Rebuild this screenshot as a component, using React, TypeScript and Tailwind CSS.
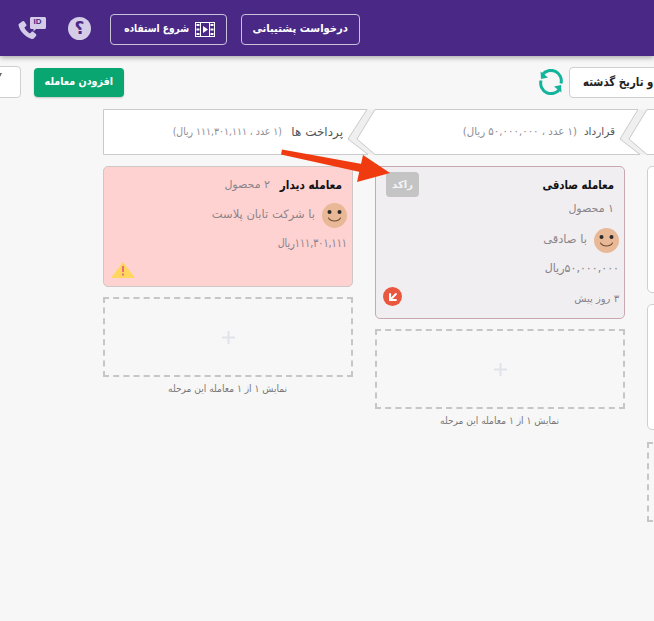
import React from "react";
import { ArrowDownLeft } from "lucide-react";

const Smile = ({ eyeColor = "#2b2b2b" }: { eyeColor?: string }) => (
  <svg width="25" height="25" viewBox="0 0 25 25" className="shrink-0">
    <circle cx="12.5" cy="12.5" r="12.5" fill="#e9b897" />
    <circle cx="7.5" cy="9" r="2" fill={eyeColor} />
    <circle cx="17.5" cy="9" r="2" fill={eyeColor} />
    <path d="M6.5 15c2.5 4 9.5 4 12 0" fill="none" stroke="#6b4a35" strokeWidth="1.1" strokeLinecap="round" />
  </svg>
);

const Plus = () => (
  <svg width="13" height="13" viewBox="0 0 13 13">
    <path d="M6.5 0v13M0 6.5h13" stroke="#e1e3ea" strokeWidth="2" />
  </svg>
);

const AddBox = ({ note = true }: { note?: boolean }) => (
  <>
    <div className="w-[250px] h-[80px] border-[2.5px] border-dashed border-[#c6c6c6] flex items-center justify-center">
      <Plus />
    </div>
    {note && (
      <div className="w-[250px] mt-[5px] flex justify-center text-[10px] leading-[14px] text-[#777]">
        <span dir="rtl" className="inline-block w-[118px] whitespace-nowrap origin-right scale-x-[0.91]">
          نمایش ۱ از ۱ معامله این مرحله
        </span>
      </div>
    )}
  </>
);

const StageShape = ({ d }: { d: string }) => (
  <svg width="272" height="46" viewBox="0 0 272 46" className="absolute left-0 top-0 overflow-visible">
    <path d="M264 0.500L245 30 265 45.500H272L254 30 272 0.500Z" fill="#efefef" />
    <path d={d} fill="#ffffff" stroke="#cacaca" strokeWidth="1" />
  </svg>
);

const Stage = ({
  d,
  name,
  info,
  nameClass,
  infoClass,
}: {
  d: string;
  name?: string;
  info?: string;
  nameClass?: string;
  infoClass?: string;
}) => (
  <div className="relative w-[272px] h-[46px] shrink-0">
    <StageShape d={d} />
    <div dir="rtl" className="relative w-[250px] h-[46px] pr-[10px] flex items-center gap-[9px] whitespace-nowrap">
      <span className={nameClass}>{name}</span>
      {info && <span className={infoClass}>{info}</span>}
    </div>
  </div>
);

export default function App() {
  return (
    <div
      dir="ltr"
      className="relative w-[654px] h-[621px] overflow-hidden bg-[#f7f7f7] font-['DejaVu_Sans',sans-serif]"
    >
      {/* header */}
      <header className="h-[56px] bg-[#4a2885] shadow-[0_2px_5px_rgba(0,0,0,0.3)] flex items-center pl-[18px]">
        <svg width="29" height="25" viewBox="0 0 29 25" className="shrink-0">
          <g transform="translate(-1.5 0)">
            <path
              d="M3.2 7.2 6 5.2c.6-.4 1.4-.3 1.8.3l2 3c.3.5.3 1.2-.2 1.6l-1.7 1.5c1 2.2 3 4.5 5.5 5.8l1.6-1.5c.5-.5 1.200-.5 1.700-.1l2.700 2.300c.5.5.6 1.300.1 1.900l-2 2.300c-.6.600-1.500.9-2.300.6C8.500 20.800 3.500 15.500 2 9.300c-.2-.8.4-1.600 1.200-2.100Z"
              fill="#d5cde8"
            />
          </g>
          <path d="M12 2.500c0-.8.700-1.500 1.500-1.500h13c.8 0 1.500.7 1.500 1.500V11.500c0 .8-.7 1.500-1.500 1.500h-8.500l-2.500 2.500V13h-2c-.8 0-1.500-.7-1.500-1.500Z" fill="#d5cde8" />
        </svg>
        <span className="absolute left-[33.5px] top-[17px] text-[8px] leading-[10px] font-bold font-['Liberation_Sans',sans-serif] text-[#4a2885]">ID</span>
        <div className="ml-[21px] mt-[1px] w-[23px] h-[23px] rounded-full bg-[#d5cde8] flex items-center justify-center text-[#4a2885] text-[17px] font-bold leading-none">
          ؟
        </div>
        <button className="ml-[19px] mt-[3px] w-[117px] h-[31px] rounded-[4px] border border-[#c9c2d8] flex items-center justify-center gap-[6px] text-white font-bold">
          <span dir="rtl" className="inline-block w-[66px] whitespace-nowrap origin-right scale-x-[0.82] text-[11px] text-right">شروع استفاده</span>
          <svg width="20" height="15" viewBox="0 0 20 15" className="shrink-0">
            <rect x="0.500" y="0.500" width="19" height="14" fill="none" stroke="#fff" />
            <path d="M5.500 0v15M14.500 0v15" stroke="#fff" />
            <path d="M1.500 2h3v2h-3zM1.500 6.500h3v2h-3zM1.500 11h3v2h-3zM15.500 2h3v2h-3zM15.500 6.500h3v2h-3zM15.500 11h3v2h-3z" fill="#fff" />
            <path d="M8 4l5 3.500-5 3.500z" fill="#fff" />
          </svg>
        </button>
        <button className="ml-[14px] mt-[3px] w-[119px] h-[31px] rounded-[4px] border border-[#c9c2d8] flex items-center justify-center text-white text-[11px] font-bold">
          <span dir="rtl" className="inline-block w-[94px] whitespace-nowrap origin-right scale-x-[0.91] text-right">درخواست پشتیبانی</span>
        </button>
      </header>

      {/* toolbar */}
      <div className="mt-[10px] h-[32px] flex items-center justify-between ml-[-20px] mr-[-120px]">
        <div className="flex items-center gap-[13px]">
          <div className="relative w-[41px] h-[32px] bg-white border border-[#cfcfcf] rounded-[4px]">
            <svg width="6" height="4" viewBox="0 0 6 4" className="absolute left-[15px] top-[6px]">
              <path d="M0 0H6L4 4Z" fill="#666" />
            </svg>
          </div>
          <button className="w-[90px] h-[29px] rounded-[4px] bg-[#0aa672] shadow-[0_1px_2px_rgba(0,0,0,0.2)] flex items-center justify-center text-white text-[11px] font-bold">
            <span dir="rtl" className="inline-block w-[67px] whitespace-nowrap origin-right scale-x-[0.87] text-right">افزودن معامله</span>
          </button>
        </div>
        <div className="flex items-center gap-[6px]">
          <svg width="24" height="26" viewBox="0 0 24 26" className="shrink-0">
            <path d="M3.500 5.500A10.500 10.500 0 0 1 22 14.500" fill="none" stroke="#14b39b" strokeWidth="3" />
            <path d="M1.500 2.500 2 10l7-1.500Z" fill="#14b39b" />
            <path d="M20.500 20.500A10.500 10.500 0 0 1 2 11.500" fill="none" stroke="#14b39b" strokeWidth="3" />
            <path d="M22.500 23.500 22 16l-7 1.500Z" fill="#14b39b" />
          </svg>
          <div dir="rtl" className="w-[205px] h-[31px] bg-white border border-[#cfcfcf] rounded-[4px] flex items-center justify-end pl-[13px] text-[12px] font-bold text-[#222] whitespace-nowrap">
            <span className="inline-block origin-left scale-x-[0.85]">دارای تأخیر و تاریخ گذشته</span>
          </div>
        </div>
      </div>

      {/* board */}
      <div className="mt-[11px] ml-[103px] flex w-[900px]">
        {/* column 1 */}
        <div className="w-[272px] shrink-0">
          <Stage
            d="M0.500 0.500H264L245 30 265 45.500H0.500Z"
            name="پرداخت ها"
            info="(۱ عدد ، ۱۱۱,۳۰۱,۱۱۱ ریال)"
            nameClass="text-[12px] text-[#555]"
            infoClass="inline-block w-[109px] origin-right scale-x-[0.886] text-[10.5px] text-[#8b8b93]"
          />
          <div dir="rtl" className="mt-[11px] w-[250px] h-[121px] rounded-[5px] bg-[#ffd2d2] border border-[#cfc6c6] pt-[9px] pr-[5px] relative">
            <div className="flex items-center gap-[9px] pr-[5px] h-[18px] whitespace-nowrap">
              <span className="inline-block w-[63px] origin-right scale-x-[0.875] text-[12px] font-bold text-[#111]">معامله دیدار</span>
              <span className="text-[11px] text-[#8b8589]">۲ محصول</span>
            </div>
            <div className="flex items-center gap-[7px] mt-[8.500px] text-[11.500px] text-[#8b8589]">
              <Smile />
              <span>با شرکت تابان پلاست</span>
            </div>
            <div className="mt-[6.500px] text-[11.500px] leading-[18px] text-[#85808a]">
              <span className="inline-block w-[69px] whitespace-nowrap origin-right scale-x-[0.83]">۱۱۱,۳۰۱,۱۱۱ریال</span>
            </div>
            <svg width="24" height="16" viewBox="0 0 24 16" className="absolute left-[7px] bottom-[8px]">
              <path d="M12 0 24 16H0Z" fill="#ffd75e" />
              <path d="M11 4h2v6h-2zM11 11.500h2v2h-2z" fill="#ef6a7a" />
            </svg>
          </div>
          <div className="mt-[10px]">
            <AddBox />
          </div>
        </div>

        {/* column 2 */}
        <div className="w-[272px] shrink-0">
          <Stage
            d="M0 0.500H263L245 30 265 45.500H0L-18 30Z"
            name="قرارداد"
            info="(۱ عدد ، ۵۰,۰۰۰,۰۰۰ ریال)"
            nameClass="text-[10.5px] text-[#555]"
            infoClass="inline-block w-[114px] mr-[-2px] origin-right scale-x-[0.97] text-[10.5px] text-[#8b8b93]"
          />
          <div dir="rtl" className="mt-[11px] w-[250px] h-[153px] rounded-[5px] bg-[#f0eef0] border border-[#c9a9b0] pt-[9px] pr-[5px] relative">
            <div className="pr-[5px] h-[18px] leading-[18px] text-[12px] font-bold text-[#111] whitespace-nowrap">
              <span className="inline-block w-[71px] origin-right scale-x-[0.845]">معامله صادقی</span>
            </div>
            <div className="pr-[5px] mt-[7px] leading-[16px] text-[11px] text-[#8b8589]">۱ محصول</div>
            <div className="flex items-center gap-[7px] mt-[10.500px] text-[11.500px] text-[#8b8589]">
              <Smile />
              <span>با صادقی</span>
            </div>
            <div className="mt-[6.500px] text-[11.500px] leading-[18px] text-[#85808a]">
              <span className="inline-block w-[73px] whitespace-nowrap origin-right scale-x-[0.96]">۵۰,۰۰۰,۰۰۰ریال</span>
            </div>
            <div className="mt-[14px] text-[10px] leading-[16px] text-[#85808a]">۳ روز پیش</div>
            <div className="absolute left-[10px] top-[5px] w-[33px] h-[25px] rounded-[4px] bg-[#c4c4c4] flex items-center justify-center text-[#f4f4f4] text-[10px] font-bold">
              راکد
            </div>
            <div className="absolute left-[7px] bottom-[12px] w-[19px] h-[19px] rounded-full bg-[#e9573f] flex items-center justify-center">
              <ArrowDownLeft size={14} color="#fff" strokeWidth={3.5} />
            </div>
          </div>
          <div className="mt-[10px]">
            <AddBox />
          </div>
        </div>

        {/* column 3 */}
        <div className="w-[272px] shrink-0">
          <Stage d="M0 0.500H263L245 30 265 45.500H0L-18 30Z" />
          <div className="mt-[11px] w-[250px] h-[127px] rounded-[5px] bg-white border border-[#cfcfcf]" />
          <div className="mt-[11px] w-[250px] h-[126px] rounded-[5px] bg-white border border-[#cfcfcf]" />
          <div className="mt-[12px]">
            <AddBox note={false} />
          </div>
        </div>
      </div>

      {/* annotation arrow over the board */}
      <svg width="654" height="621" viewBox="0 0 654 621" className="absolute left-0 top-0 pointer-events-none">
        <path d="M282 149.500 281 154.500 360 172 362 164Z" fill="#f03a10" />
        <path d="M363 155 390 173 357 182Z" fill="#f03a10" />
      </svg>
    </div>
  );
}
